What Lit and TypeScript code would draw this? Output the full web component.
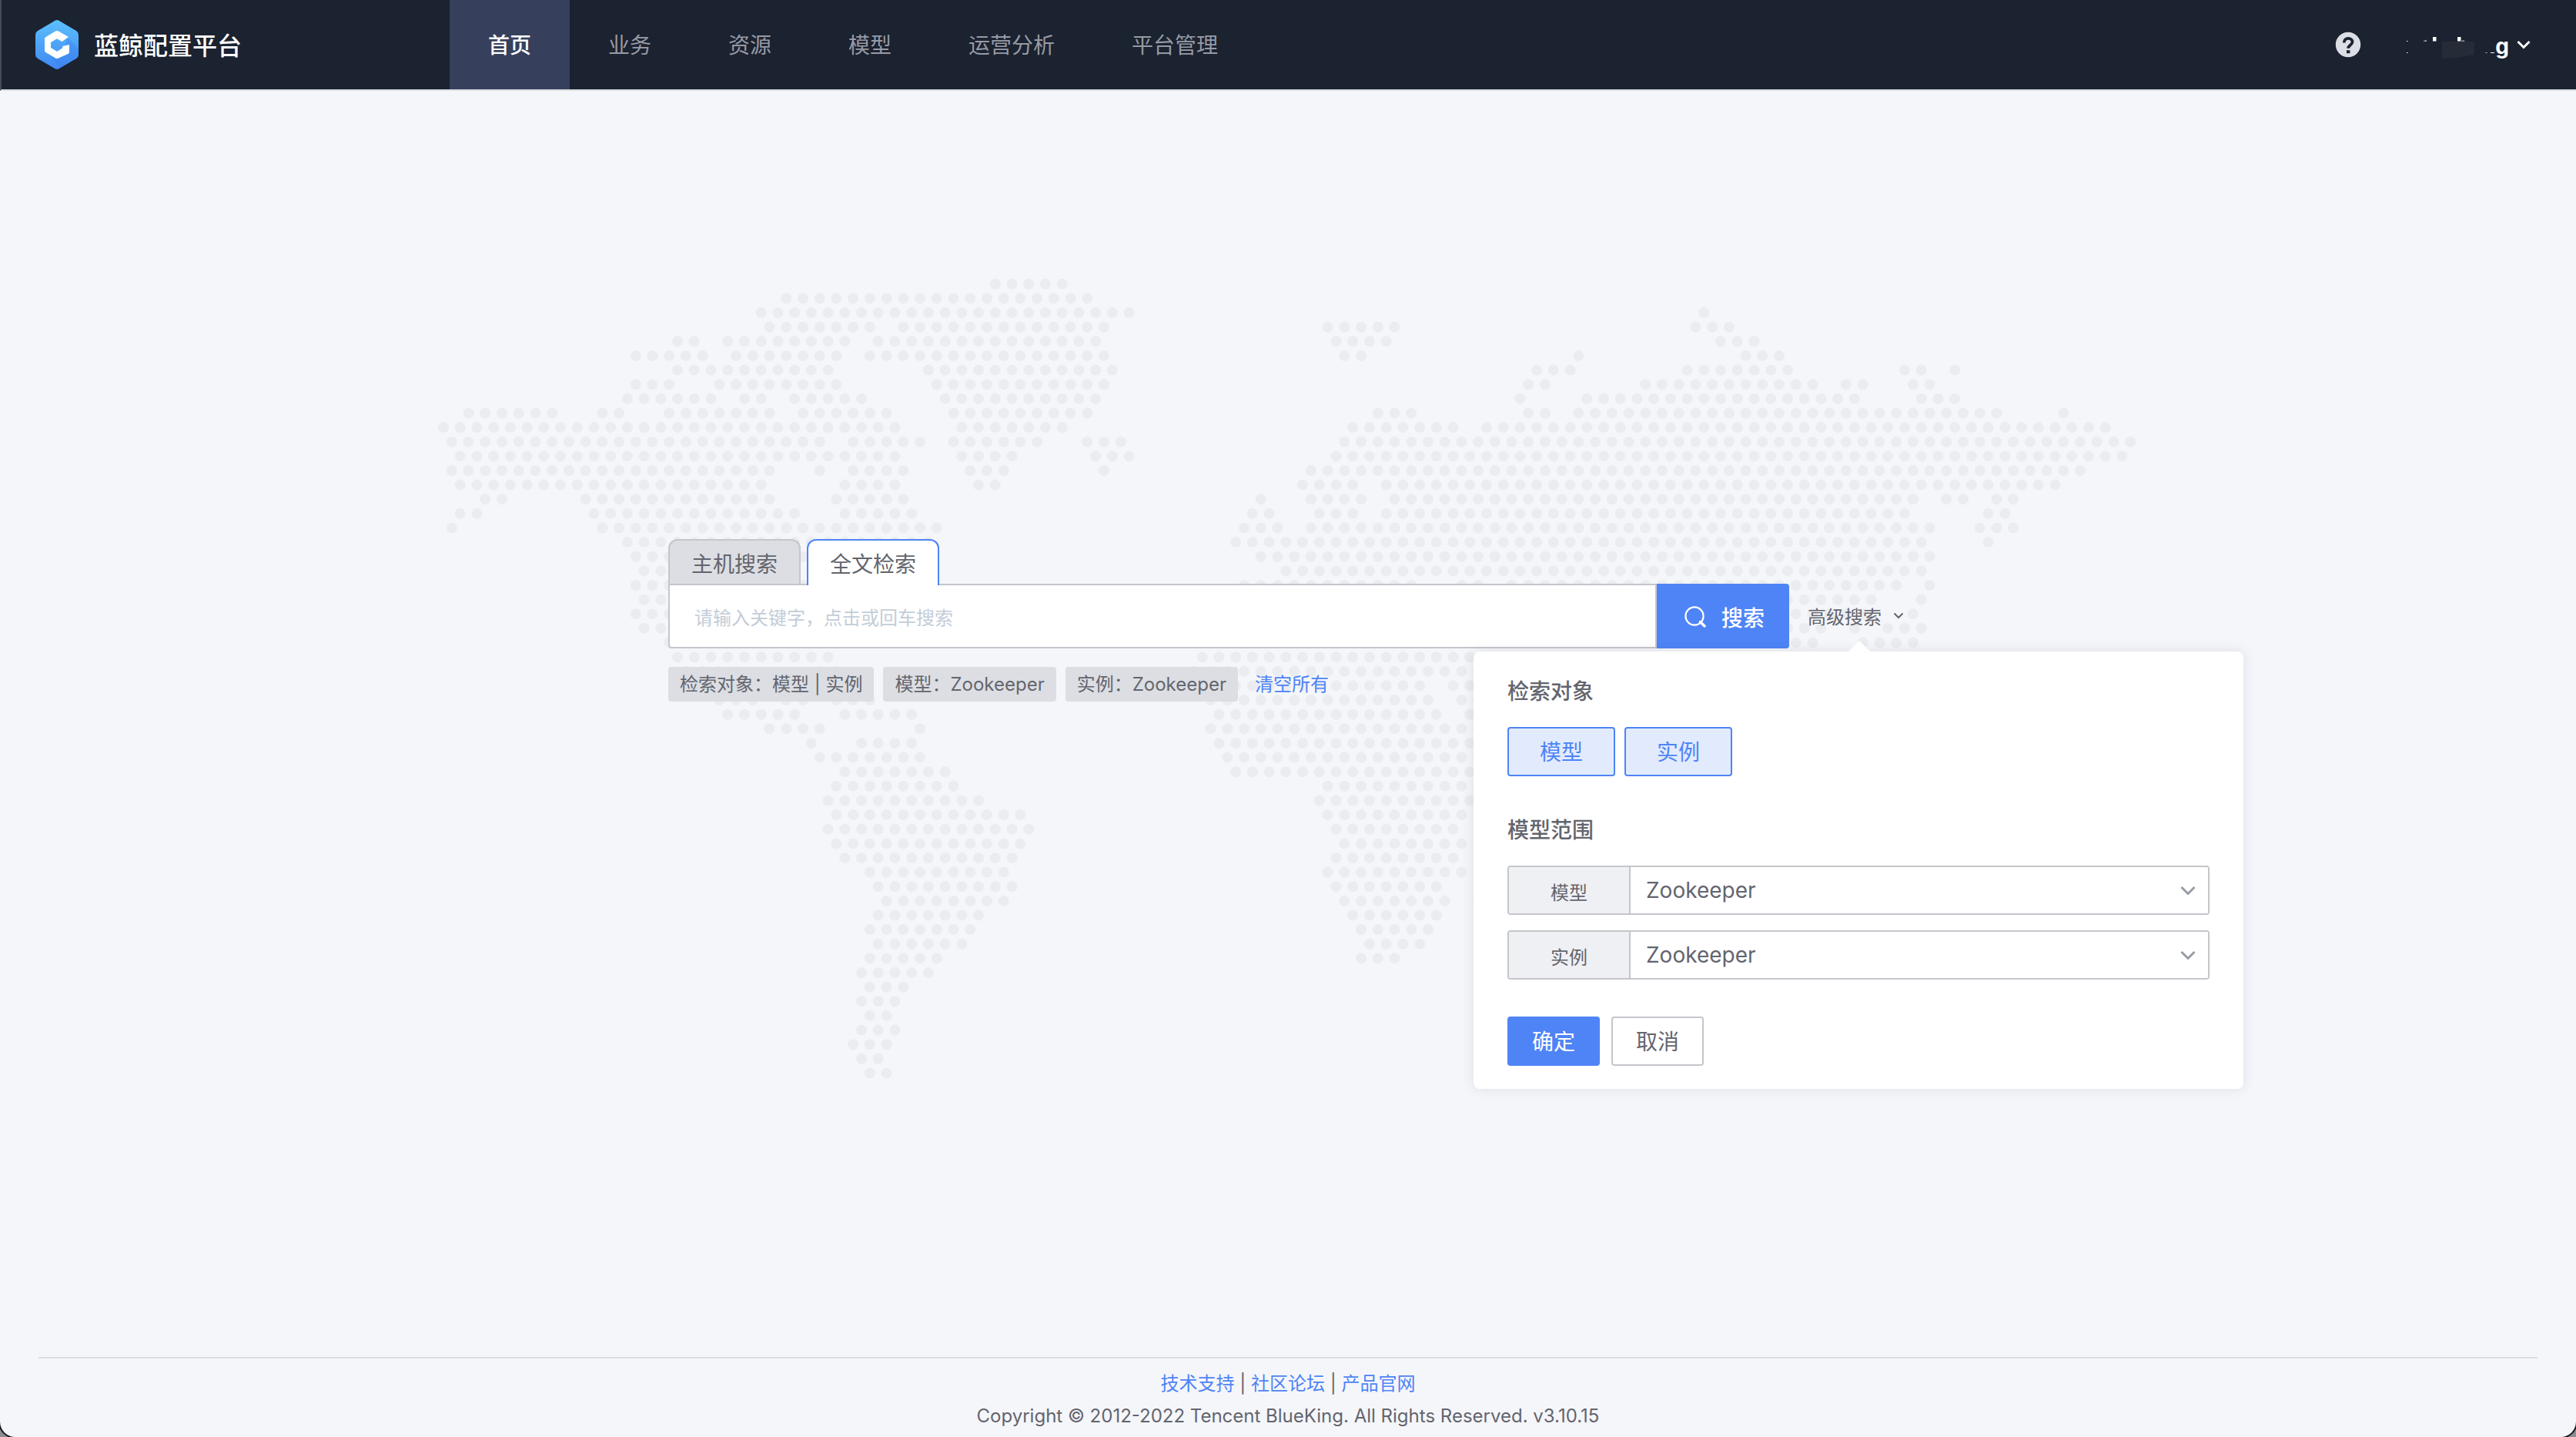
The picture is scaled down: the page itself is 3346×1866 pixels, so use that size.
import { LitElement, html, css } from "lit";
import { customElement, state } from "lit/decorators.js";
import { classMap } from "lit/directives/class-map.js";

type Segment = [number, number];

/* Dotted world map. Every row lists runs of dots in half-column units. */
const WEST: Record<number, Segment[]> = {
  0: [[66, 74]],
  1: [[41, 77]],
  2: [[38, 82]],
  3: [[39, 51], [55, 79]],
  4: [[28, 30], [34, 48], [52, 78]],
  5: [[23, 31], [35, 47], [51, 79]],
  6: [[28, 46], [58, 80]],
  7: [[23, 27], [33, 47], [59, 79]],
  8: [[22, 32], [36, 38], [42, 50], [60, 78]],
  9: [[3, 13], [19, 21], [27, 39], [43, 53], [61, 77]],
  10: [[0, 54], [62, 74]],
  11: [[1, 45], [49, 57], [61, 71], [77, 81]],
  12: [[2, 54], [62, 68], [78, 82]],
  13: [[1, 39], [45, 45], [49, 55], [63, 67], [79, 79]],
  14: [[2, 38], [48, 54], [64, 66]],
  15: [[5, 7], [17, 39], [47, 55]],
  16: [[2, 4], [18, 42], [48, 56]],
  17: [[1, 1], [19, 59]],
  18: [[22, 58]],
  19: [[23, 55]],
  20: [[24, 54]],
  21: [[23, 53]],
  22: [[24, 52]],
  23: [[23, 51]],
  24: [[24, 50]],
  25: [[27, 47]],
  26: [[28, 46]],
  27: [[29, 35], [45, 47]],
  28: [[30, 36]],
  29: [[33, 37], [41, 43], [47, 51]],
  30: [[34, 42], [48, 56]],
  31: [[39, 45], [57, 57]],
  32: [[44, 44], [50, 56]],
  33: [[45, 57]],
  34: [[48, 60]],
  35: [[47, 61]],
  36: [[46, 64]],
  37: [[47, 69]],
  38: [[46, 70]],
  39: [[47, 69]],
  40: [[48, 68]],
  41: [[51, 67]],
  42: [[52, 68]],
  43: [[53, 67]],
  44: [[52, 64]],
  45: [[51, 63]],
  46: [[52, 62]],
  47: [[51, 59]],
  48: [[50, 58]],
  49: [[51, 55]],
  50: [[50, 54]],
  51: [[51, 53]],
  52: [[50, 54]],
  53: [[49, 53]],
  54: [[50, 52]],
  55: [[51, 53]],
};

const EAST: Record<number, Segment[]> = {
  2: [[150, 150]],
  3: [[105, 113], [149, 153]],
  4: [[106, 112], [152, 156]],
  5: [[107, 109], [135, 135], [155, 159]],
  6: [[130, 134], [148, 160], [174, 176], [180, 180]],
  7: [[129, 131], [143, 163], [167, 169], [175, 177]],
  8: [[128, 128], [136, 168], [176, 180]],
  9: [[111, 115], [129, 131], [135, 185], [193, 193]],
  10: [[108, 120], [124, 198]],
  11: [[107, 201]],
  12: [[106, 200]],
  13: [[103, 195]],
  14: [[102, 108], [112, 192]],
  15: [[97, 97], [103, 109], [113, 175], [179, 181], [185, 187]],
  16: [[96, 98], [104, 108], [112, 174], [184, 186]],
  17: [[95, 99], [103, 177], [183, 187]],
  18: [[94, 176], [184, 184]],
  19: [[97, 177]],
  20: [[100, 176]],
  21: [[95, 115], [121, 123], [127, 173], [177, 177]],
  22: [[96, 170], [176, 176]],
  23: [[95, 169], [175, 175]],
  24: [[94, 164], [168, 168], [172, 176]],
  25: [[93, 163], [169, 175]],
  26: [[90, 160]],
  27: [[89, 159]],
  28: [[90, 116], [120, 150]],
  29: [[91, 117], [121, 150]],
  30: [[92, 118], [122, 150]],
  31: [[91, 149]],
  32: [[92, 148]],
  33: [[93, 147]],
  34: [[94, 146]],
  35: [[105, 145]],
  36: [[104, 144]],
  37: [[105, 121], [125, 143]],
  38: [[106, 120]],
  39: [[107, 121]],
  40: [[106, 120]],
  41: [[105, 123]],
  42: [[106, 118]],
  43: [[107, 119], [123, 125]],
  44: [[108, 118]],
  45: [[109, 117]],
  46: [[110, 116]],
  47: [[109, 113]],
};

const COLUMN = 10.86;
const ROW = 18.63;

function dots(rows: Record<number, Segment[]>, originX: number): string {
  let d = "";
  for (const [row, segments] of Object.entries(rows)) {
    const y = (10.8 + Number(row) * ROW).toFixed(1);
    for (const [from, to] of segments) {
      for (let i = from; i <= to; i += 2) {
        d += `M${(originX + i * COLUMN).toFixed(1)} ${y}h0`;
      }
    }
  }
  return d;
}

const MAP_PATH = dots(WEST, 11) + dots(EAST, 19.3);

const NAV = ["首页", "业务", "资源", "模型", "运营分析", "平台管理"];
const TABS = ["主机搜索", "全文检索"];
const TARGETS = ["模型", "实例"];
const CHIPS = ["检索对象：模型 | 实例", "模型：Zookeeper", "实例：Zookeeper"];
const FOOTER_LINKS = ["技术支持", "社区论坛", "产品官网"];

@customElement("app-header")
class AppHeader extends LitElement {
  static styles = css`
    :host {
      display: block;
    }
    .bar {
      display: flex;
      height: 116px;
      background: #1b2230;
      border-left: 2px solid #474c58;
      border-bottom: 2px solid #dcdee3;
      color: #fff;
    }
    .brand {
      display: flex;
      align-items: center;
      gap: 20px;
      width: 582px;
      padding-left: 44px;
      box-sizing: border-box;
      font-size: 32px;
      font-weight: 500;
      color: #fff;
      text-decoration: none;
    }
    .brand span {
      padding-bottom: 2px;
    }
    .logo {
      width: 56px;
      height: 64px;
    }
    .nav {
      display: flex;
      flex: 1;
    }
    .item {
      display: flex;
      align-items: center;
      padding: 0 50px 2px;
      font-size: 28px;
      color: #979aa5;
      text-decoration: none;
    }
    .item.active {
      background: #36405c;
      color: #fff;
      font-weight: 500;
    }
    .tools {
      display: flex;
      align-items: center;
      gap: 58px;
      padding-right: 58px;
    }
    button {
      display: flex;
      align-items: center;
      padding: 0;
      border: 0;
      background: none;
      color: inherit;
      font: inherit;
      cursor: pointer;
    }
    .help svg {
      width: 34px;
      height: 34px;
    }
    .user {
      font-size: 28px;
      font-weight: 700;
    }
    .user span {
      padding-top: 4px;
    }
    .mask {
      width: 116px;
      height: 40px;
    }
    .user .caret {
      width: 20px;
      height: 14px;
      margin-left: 9px;
    }
  `;

  render() {
    return html`
      <header class="bar">
        <a class="brand" href="#">
          <svg class="logo" viewBox="0 0 56 64" aria-hidden="true">
            <defs>
              <linearGradient id="logo-fill" x1="0" y1="0" x2="0" y2="1">
                <stop offset="0" stop-color="#5cc0fc" />
                <stop offset="1" stop-color="#4088f3" />
              </linearGradient>
            </defs>
            <path
              fill="url(#logo-fill)"
              d="M25.500 .8q2.500-1.400 5 0l22.500 13.200q3 1.800 3 5v26q0 3.200-3 5L30.500 63.200q-2.500 1.400-5 0L3 50q-3-1.800-3-5V19q0-3.200 3-5z"
            />
            <path fill="#3a7eee" opacity=".35" d="M41 22l15 15v8q0 3.200-3 5L32 62 18 45l20-6z" />
            <path
              fill="#fff"
              d="M26 14.500q2-1.100 4 0l13 7.500-8.500 6-6.500-3.800-8 4.800v7l8 4.800 6.800-4 .6-2.800 8.600-2v9.800q0 1.200-1.200 2L30 49.500q-2 1.100-4 0L13.500 42q-1.500-.9-1.500-2.600V24.600q0-1.700 1.500-2.600z"
            />
          </svg>
          <span>蓝鲸配置平台</span>
        </a>
        <nav class="nav">
          ${NAV.map(
            (name, i) => html`<a class=${classMap({ item: true, active: i === 0 })} href="#">${name}</a>`
          )}
        </nav>
        <div class="tools">
          <button class="help" type="button" aria-label="帮助">
            <svg viewBox="0 0 34 34" aria-hidden="true">
              <circle cx="17" cy="17" r="16.200" fill="#dcdee5" />
              <path
                d="M11.800 14.400c0-7.400 10.700-7 10.700-1 0 4-5.300 4.200-5.300 8.300"
                fill="none"
                stroke="#1b2230"
                stroke-width="3.800"
              />
              <rect x="15" y="24.200" width="4.400" height="4" fill="#1b2230" />
            </svg>
          </button>
          <button class="user" type="button">
            <svg class="mask" viewBox="0 0 116 40" aria-hidden="true">
              <path d="M47 16h42v17l-22 4-20 1z" fill="#262b38" />
              <path
                d="M1 15h1.500v1H1zM1 30h1.500v1H1zM22 15.500l3-1h2v1zM35 10h4.500v5.500H35zM67 10h4.500v5.500H67zM72 15l3-.5 2 1h-5zM110 30h5v1h-5z"
                fill="#fff"
              />
              <path d="M103 30h3v1h-3z" fill="#8a8e98" />
            </svg>
            <span>g</span>
            <svg class="caret" viewBox="0 0 20 14" aria-hidden="true">
              <path d="M2.500 3l7.500 7.500L17.500 3" fill="none" stroke="#fff" stroke-width="3" />
            </svg>
          </button>
        </div>
      </header>
    `;
  }
}

@customElement("advanced-panel")
class AdvancedPanel extends LitElement {
  static styles = css`
    :host {
      display: block;
    }
    .panel {
      position: relative;
      box-sizing: border-box;
      padding: 32px 44px 30px;
      border-radius: 8px;
      background: #fff;
      box-shadow: 0 0 16px rgba(50, 55, 80, 0.12);
      color: #63656e;
      font-size: 28px;
    }
    .arrow {
      position: absolute;
      left: 50%;
      bottom: 100%;
      width: 28px;
      height: 14px;
      margin-left: -13px;
      background: #fff;
      clip-path: polygon(50% 0, 100% 100%, 0 100%);
    }
    fieldset {
      margin: 0;
      padding: 0;
      border: 0;
      min-width: 0;
    }
    legend {
      padding: 0;
      font-weight: 500;
      line-height: 40px;
    }
    button {
      height: 64px;
      padding: 0 0 2px;
      border: 2px solid #c4c6cc;
      border-radius: 4px;
      background: #fff;
      color: inherit;
      font: inherit;
      cursor: pointer;
    }
    .targets {
      display: flex;
      gap: 12px;
      padding: 26px 0 50px;
    }
    .target {
      width: 140px;
    }
    .target.on {
      border-color: #4e84f6;
      background: #e1ebfd;
      color: #4e84f6;
    }
    .ranges {
      display: flex;
      flex-direction: column;
      gap: 20px;
      padding: 26px 0 48px;
    }
    .range {
      display: grid;
      grid-template-columns: 158px 1fr 52px;
      height: 60px;
      border: 2px solid #c4c6cc;
      border-radius: 4px;
      overflow: hidden;
    }
    .range label {
      display: flex;
      align-items: center;
      justify-content: center;
      padding-top: 2px;
      border-right: 2px solid #c4c6cc;
      background: #eff0f4;
      font-size: 24px;
    }
    .range select {
      grid-row: 1;
      grid-column: 2 / 4;
      padding: 0 20px;
      border: 0;
      background: #fff;
      color: inherit;
      font: inherit;
      appearance: none;
    }
    .range svg {
      grid-row: 1;
      grid-column: 3;
      width: 24px;
      height: 16px;
      align-self: center;
      justify-self: center;
      pointer-events: none;
    }
    .actions {
      display: flex;
      gap: 15px;
    }
    .actions button {
      width: 120px;
    }
    .actions .primary {
      border-color: #4e84f6;
      background: #4e84f6;
      color: #fff;
    }
  `;

  render() {
    return html`
      <div class="panel">
        <div class="arrow"></div>
        <fieldset>
          <legend>检索对象</legend>
          <div class="targets">
            ${TARGETS.map((t) => html`<button class="target on" type="button" aria-pressed="true">${t}</button>`)}
          </div>
        </fieldset>
        <fieldset>
          <legend>模型范围</legend>
          <div class="ranges">
            ${TARGETS.map(
              (t, i) => html`
                <div class="range">
                  <label for=${`range-${i}`}>${t}</label>
                  <select id=${`range-${i}`}>
                    <option>Zookeeper</option>
                  </select>
                  <svg viewBox="0 0 24 16" aria-hidden="true">
                    <path d="M3.500 4l8.500 8.500L20.500 4" fill="none" stroke="#979ba5" stroke-width="3" />
                  </svg>
                </div>
              `
            )}
          </div>
        </fieldset>
        <div class="actions">
          <button class="primary" type="button">确定</button>
          <button type="button">取消</button>
        </div>
      </div>
    `;
  }
}

@customElement("app-root")
class AppRoot extends LitElement {
  static styles = css`
    :host {
      display: block;
      background: #8d8d8f;
      color: #63656e;
      font-family: Inter, "Noto Sans CJK SC", sans-serif;
      font-size: 24px;
    }
    .page {
      display: flex;
      flex-direction: column;
      min-height: 100vh;
      overflow: hidden;
      border-radius: 0 0 20px 20px;
      box-shadow: 0 0 0 2px #17181c;
      background: #f5f6fa;
    }
    a {
      color: #4e84f6;
      text-decoration: none;
    }
    button {
      border: 0;
      padding: 0;
      background: none;
      color: inherit;
      font: inherit;
      cursor: pointer;
    }
    .main {
      display: grid;
      flex: 1;
      grid-template-columns: minmax(0, 1fr);
      align-items: start;
      justify-items: center;
    }
    .map {
      grid-area: 1 / 1;
      width: 2216px;
      height: 1046px;
      margin-top: 240px;
    }
    .search {
      grid-area: 1 / 1;
      width: 100%;
      max-width: 1610px;
      margin-top: 582px;
    }
    .tabs {
      display: flex;
      gap: 8px;
      margin-bottom: -2px;
    }
    .tab {
      height: 60px;
      padding: 0 28px;
      border: 2px solid #c4c6cc;
      border-bottom: 0;
      border-radius: 12px 12px 0 0;
      background: #dcdee3;
      font-size: 28px;
    }
    .tab.active {
      position: relative;
      z-index: 1;
      border-color: #4e84f6;
      background: #fff;
    }
    .row {
      display: flex;
      height: 84px;
    }
    .keyword {
      flex: 1;
      min-width: 0;
      box-sizing: border-box;
      padding: 4px 32px 0;
      border: 2px solid #c4c6cc;
      border-radius: 0 0 0 4px;
      background: #fff;
      color: inherit;
      font: inherit;
    }
    .keyword::placeholder {
      color: #c3cdd7;
      opacity: 1;
    }
    .submit {
      display: flex;
      align-items: center;
      gap: 20px;
      padding: 2px 32px 0 36px;
      border-radius: 0 4px 4px 0;
      background: #4e84f6;
      color: #fff;
      font-size: 28px;
      font-weight: 500;
    }
    .submit svg {
      width: 28px;
      height: 28px;
    }
    .advanced {
      position: relative;
      display: flex;
      padding-left: 24px;
    }
    .toggle {
      display: flex;
      align-items: center;
      gap: 14px;
      width: 130px;
      padding-bottom: 2px;
    }
    .toggle svg {
      flex: none;
      width: 16px;
      height: 12px;
    }
    .toggle span {
      white-space: nowrap;
    }
    .popover {
      position: absolute;
      z-index: 2;
      top: calc(100% + 4px);
      left: calc(50% + 13px);
      width: 1000px;
      transform: translateX(-50%);
    }
    .history {
      display: flex;
      gap: 12px;
      align-items: center;
      padding-top: 24px;
      line-height: 45px;
    }
    .chip {
      padding: 0 15px;
      border-radius: 4px;
      background: #dcdee3;
    }
    .clear {
      padding: 0 10px;
      color: #4e84f6;
    }
    .footer {
      margin: 0 50px;
      padding: 12px 0 6px;
      border-top: 2px solid #dcdee3;
      line-height: 42px;
      text-align: center;
    }
    .footer p {
      margin: 0;
    }
  `;

  @state() private tab = 1;

  render() {
    return html`
      <div class="page" lang="zh-CN">
        <app-header></app-header>
        <main class="main">
          <svg class="map" viewBox="0 0 2216 1046" aria-hidden="true">
            <path d=${MAP_PATH} fill="none" stroke="#ebecf0" stroke-width="14" stroke-linecap="round" />
          </svg>
          <section class="search">
            <div class="tabs">
              ${TABS.map(
                (name, i) => html`
                  <button
                    type="button"
                    class=${classMap({ tab: true, active: i === this.tab })}
                    @click=${() => (this.tab = i)}
                  >
                    ${name}
                  </button>
                `
              )}
            </div>
            <div class="row">
              <input class="keyword" type="text" aria-label="关键字" placeholder="请输入关键字，点击或回车搜索" />
              <button class="submit" type="button">
                <svg viewBox="0 0 28 28" aria-hidden="true">
                  <circle cx="13" cy="13" r="11.600" fill="none" stroke="#fff" stroke-width="2.200" />
                  <path d="M20.500 20.500l5.500 5.500" stroke="#fff" stroke-width="3.400" stroke-linecap="round" />
                </svg>
                <span>搜索</span>
              </button>
              <div class="advanced">
                <button class="toggle" type="button" aria-expanded="true">
                  <span>高级搜索</span>
                  <svg viewBox="0 0 16 12" aria-hidden="true">
                    <path d="M2.500 3.500l5.500 5.500 5.500-5.500" fill="none" stroke="#63656e" stroke-width="2" />
                  </svg>
                </button>
                <advanced-panel class="popover"></advanced-panel>
              </div>
            </div>
            <div class="history">
              ${CHIPS.map((text) => html`<span class="chip">${text}</span>`)}
              <button class="clear" type="button">清空所有</button>
            </div>
          </section>
        </main>
        <footer class="footer">
          <p>${FOOTER_LINKS.map((name, i) => html`${i ? " | " : ""}<a href="#">${name}</a>`)}</p>
          <p>Copyright © 2012-2022 Tencent BlueKing. All Rights Reserved. v3.10.15</p>
        </footer>
      </div>
    `;
  }
}
